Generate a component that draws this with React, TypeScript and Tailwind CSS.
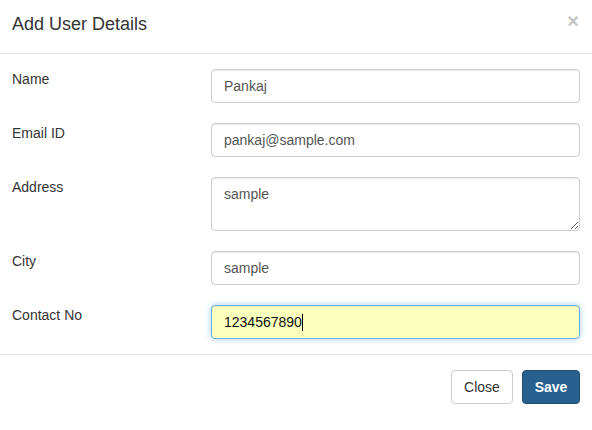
import React from "react";

const inputCls =
  "block w-full h-[34px] px-[12px] py-[6px] text-[14px] leading-[20px] text-[#555] bg-white border border-[#ccc] rounded-[4px] shadow-[inset_0_1px_1px_rgba(0,0,0,0.075)] outline-none";

function Row({ label, children }: { label: string; children: React.ReactNode }) {
  return (
    <div className="flex items-start">
      <label className="w-[199px] shrink-0 text-[14px] leading-[20px] text-[#333]">{label}</label>
      <div className="flex-1">{children}</div>
    </div>
  );
}

export default function App() {
  return (
    <div className="w-[592px] h-[430px] bg-white" style={{ fontFamily: '"Liberation Sans", Arial, sans-serif' }}>
      <div className="h-[54px] border-b border-[#e5e5e5] px-[12px] flex items-start justify-between">
        <h4 className="text-[18px] leading-[25px] text-[#333] mt-[12px]">Add User Details</h4>
        <span className="text-[20px] font-bold leading-none text-[#c4c4c4] mt-[11px] mr-[1px]">×</span>
      </div>
      <div className="pt-[15px] pb-[15px] px-[12px] flex flex-col gap-[20px]">
        <Row label="Name">
          <input className={inputCls} readOnly value="Pankaj" />
        </Row>
        <Row label="Email ID">
          <input className={inputCls} readOnly value="pankaj@sample.com" />
        </Row>
        <Row label="Address">
          <textarea
            className="block w-full h-[54px] px-[12px] py-[6px] text-[14px] leading-[20px] text-[#555] bg-white border border-[#ccc] rounded-[4px] shadow-[inset_0_1px_1px_rgba(0,0,0,0.075)] outline-none resize-y"
            readOnly
            value="sample"
          />
        </Row>
        <Row label="City">
          <input className={inputCls} readOnly value="sample" />
        </Row>
        <Row label="Contact No">
          <div className="flex items-center w-full h-[34px] px-[12px] text-[14px] leading-[20px] text-[#111] bg-[#faffbd] border border-[#66afe9] rounded-[4px] shadow-[inset_0_1px_1px_rgba(0,0,0,0.075),0_0_6px_rgba(102,175,233,0.6)]">
            <span>1234567890</span>
            <span className="inline-block w-[1px] h-[17px] bg-black"></span>
          </div>
        </Row>
      </div>
      <div className="border-t border-[#e5e5e5] pt-[15px] px-[12px] flex justify-end gap-[9px]">
        <button className="w-[62px] h-[34px] flex items-center justify-center text-[14px] leading-[20px] text-[#333] bg-white border border-[#ccc] rounded-[4px]">
          Close
        </button>
        <button className="w-[58px] h-[34px] flex items-center justify-center text-[14px] leading-[20px] font-bold text-white bg-[#28608f] border border-[#204d74] rounded-[4px]">
          Save
        </button>
      </div>
    </div>
  );
}
